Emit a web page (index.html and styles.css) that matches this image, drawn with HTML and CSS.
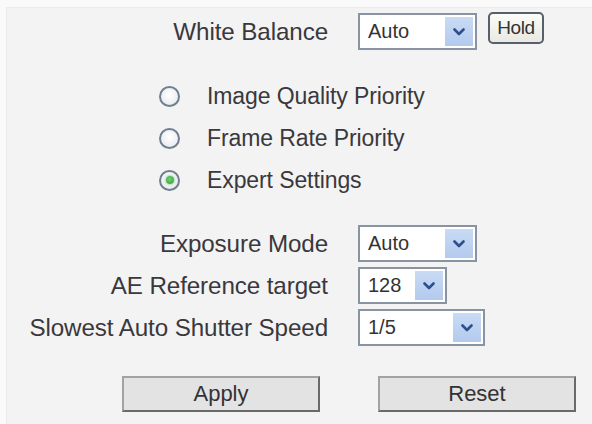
FILE: index.html
```html
<!DOCTYPE html>
<html lang="en">
<head>
<meta charset="utf-8">
<title>Camera Settings</title>
<link rel="stylesheet" href="styles.css">
</head>
<body>
<div class="panel">
  <div class="form-grid wb-row">
    <span class="label">White Balance</span>
    <div class="controls">
      <div class="select sel-119"><span class="value">Auto</span><span class="arrow"><svg viewBox="0 0 12 8" width="12" height="8"><path d="M1.5 1.5 L6 6 L10.5 1.5" fill="none" stroke="#2d4f8e" stroke-width="2.6" stroke-linecap="round" stroke-linejoin="round"/></svg></span></div>
      <button class="hold">Hold</button>
    </div>
  </div>

  <div class="modes">
    <div class="mode"><span class="radio"></span><span class="mode-text">Image Quality Priority</span></div>
    <div class="mode"><span class="radio"></span><span class="mode-text">Frame Rate Priority</span></div>
    <div class="mode"><span class="radio checked"></span><span class="mode-text">Expert Settings</span></div>
  </div>

  <div class="form-grid expert">
    <span class="label">Exposure Mode</span>
    <div class="select sel-119"><span class="value">Auto</span><span class="arrow"><svg viewBox="0 0 12 8" width="12" height="8"><path d="M1.5 1.5 L6 6 L10.5 1.5" fill="none" stroke="#2d4f8e" stroke-width="2.6" stroke-linecap="round" stroke-linejoin="round"/></svg></span></div>

    <span class="label">AE Reference target</span>
    <div class="select sel-89"><span class="value">128</span><span class="arrow"><svg viewBox="0 0 12 8" width="12" height="8"><path d="M1.5 1.5 L6 6 L10.5 1.5" fill="none" stroke="#2d4f8e" stroke-width="2.6" stroke-linecap="round" stroke-linejoin="round"/></svg></span></div>

    <span class="label">Slowest Auto Shutter Speed</span>
    <div class="select sel-127"><span class="value">1/5</span><span class="arrow"><svg viewBox="0 0 12 8" width="12" height="8"><path d="M1.5 1.5 L6 6 L10.5 1.5" fill="none" stroke="#2d4f8e" stroke-width="2.6" stroke-linecap="round" stroke-linejoin="round"/></svg></span></div>
  </div>

  <div class="actions">
    <button class="action">Apply</button>
    <button class="action">Reset</button>
  </div>
</div>
</body>
</html>
```

FILE: styles.css
```css
html, body {
  margin: 0;
  padding: 0;
}

body {
  width: 592px;
  height: 424px;
  overflow: hidden;
  background: #fafafa;
  font-family: "Liberation Sans", Arial, sans-serif;
  color: #3a383c;
}

.panel {
  margin: 7px 0 0 6px;
  height: 417px;
  background: #f3f3f3;
  border-top: 1px solid #ececec;
  border-left: 1px solid #ececec;
  box-sizing: border-box;
  padding-top: 5px;
}

/* label column ends at the same edge for every row */
.form-grid {
  display: grid;
  grid-template-columns: 321px auto;
  column-gap: 30px;
  align-items: center;
}

.label {
  text-align: right;
  font-size: 24.2px;
  white-space: nowrap;
  letter-spacing: -0.1px;
}

.controls {
  display: flex;
  align-items: flex-start;
  gap: 11px;
}

/* dropdowns */
.select {
  box-sizing: border-box;
  height: 37px;
  border: 2px solid #8994a3;
  background: #ffffff;
  display: flex;
  align-items: stretch;
  justify-content: space-between;
  padding: 2px;
}

.sel-119 { width: 119px; }
.sel-89 { width: 89px; }
.sel-127 { width: 127px; }

.value {
  font-size: 20px;
  padding-left: 6px;
  display: flex;
  align-items: center;
  color: #333;
}

.arrow {
  width: 28px;
  background: linear-gradient(#c9dbf4, #b3caee);
  display: flex;
  align-items: center;
  justify-content: center;
}

.hold {
  margin-top: -1px;
  height: 32px;
  width: 56px;
  box-sizing: border-box;
  border: 2px solid #56606c;
  border-radius: 5px;
  background: linear-gradient(#fcfcf8, #e9e9e2);
  font-family: "Liberation Sans", Arial, sans-serif;
  font-size: 19px;
  color: #333;
  padding: 0 0 1px;
  letter-spacing: -0.4px;
}

/* mode radios */
.modes {
  margin-top: 25px;
  padding-left: 152px;
}

.mode {
  height: 42px;
  display: flex;
  align-items: center;
}

.radio {
  width: 21px;
  height: 21px;
  box-sizing: border-box;
  border: 2px solid #6f7f90;
  border-radius: 50%;
  background: radial-gradient(circle at 50% 40%, #ffffff, #e4e6ea);
  margin-right: 27px;
  display: flex;
  align-items: center;
  justify-content: center;
}

.radio.checked::after {
  content: "";
  width: 8px;
  height: 8px;
  border-radius: 50%;
  background: radial-gradient(circle at 45% 40%, #6fd36f, #2e9a3c);
  box-shadow: 0 0 2px 1px rgba(120, 210, 120, 0.6);
}

.mode-text {
  font-size: 23px;
  letter-spacing: -0.1px;
}

/* expert settings */
.expert {
  margin-top: 24px;
  row-gap: 5px;
}

/* bottom buttons */
.actions {
  margin-top: 30px;
  padding-left: 115px;
  display: flex;
  gap: 58px;
}

.action {
  width: 198px;
  height: 36px;
  box-sizing: border-box;
  background: #e3e3e3;
  border-style: solid;
  border-width: 2px;
  border-color: #a2a2a2 #6a6a6a #6a6a6a #a2a2a2;
  font-family: "Liberation Sans", Arial, sans-serif;
  font-size: 22px;
  color: #333;
  padding: 0;
}
```
